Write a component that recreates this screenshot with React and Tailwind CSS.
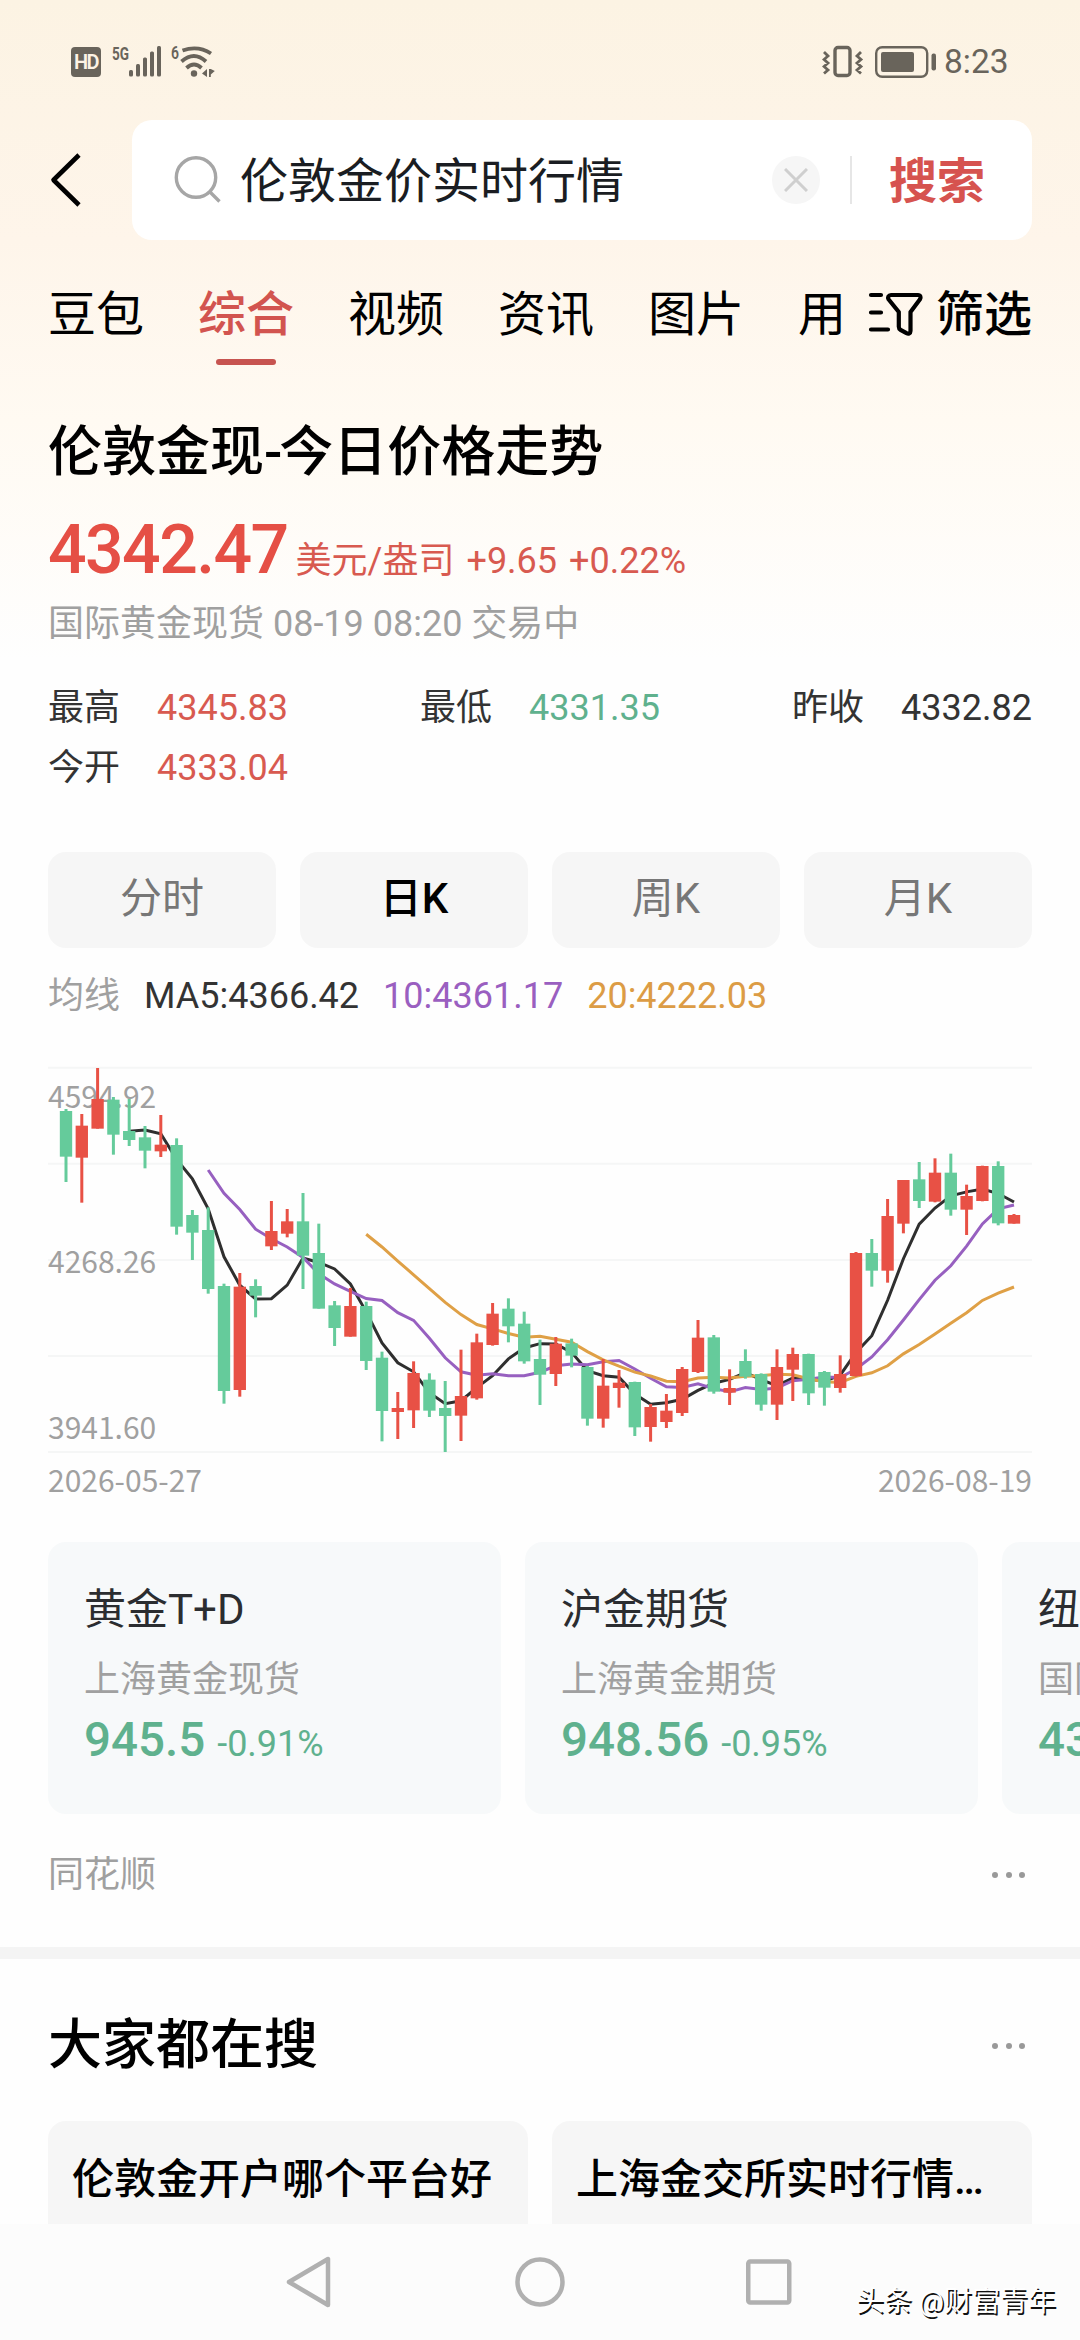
import { clsx } from 'clsx';

const tabs = ['豆包', '综合', '视频', '资讯', '图片', '用'];

const stats = [
  { label: '最高', value: '4345.83', color: 'text-[#d85a50]' },
  { label: '最低', value: '4331.35', color: 'text-[#5fb18e]' },
  { label: '昨收', value: '4332.82', color: 'text-[#333333]' },
  { label: '今开', value: '4333.04', color: 'text-[#d85a50]' },
];

const periods = ['分时', '日K', '周K', '月K'];

const related = [
  { name: '黄金T+D', market: '上海黄金现货', price: '945.5', change: '-0.91%' },
  { name: '沪金期货', market: '上海黄金期货', price: '948.56', change: '-0.95%' },
  { name: '纽', market: '国际', price: '43', change: '' },
];

const searches = ['伦敦金开户哪个平台好', '上海金交所实时行情…'];

// [direction, high, body top, body bottom, low] in chart units
const candles = [
  ['down', 177, 183, 320, 396],
  ['up', 192, 227, 323, 458],
  ['up', 54, 147, 236, 236],
  ['down', 141, 149, 254, 314],
  ['down', 147, 243, 270, 288],
  ['down', 228, 262, 302, 355],
  ['up', 195, 284, 304, 321],
  ['down', 265, 285, 530, 554],
  ['down', 480, 495, 548, 630],
  ['down', 472, 540, 717, 731],
  ['down', 701, 708, 1023, 1061],
  ['up', 669, 710, 1020, 1040],
  ['down', 688, 708, 737, 802],
  ['up', 453, 543, 589, 600],
  ['up', 477, 514, 551, 562],
  ['down', 429, 514, 617, 717],
  ['down', 521, 609, 776, 776],
  ['down', 753, 766, 834, 888],
  ['up', 714, 768, 860, 860],
  ['down', 755, 768, 933, 960],
  ['down', 905, 923, 1083, 1174],
  ['up', 1026, 1074, 1086, 1167],
  ['up', 934, 969, 1081, 1134],
  ['down', 970, 989, 1082, 1101],
  ['down', 993, 1074, 1098, 1206],
  ['up', 899, 1038, 1097, 1173],
  ['up', 851, 877, 1045, 1049],
  ['up', 759, 791, 885, 887],
  ['down', 745, 776, 829, 877],
  ['down', 785, 821, 934, 941],
  ['down', 869, 927, 974, 1065],
  ['up', 861, 881, 972, 1008],
  ['down', 866, 880, 917, 952],
  ['down', 948, 951, 1106, 1127],
  ['up', 927, 1007, 1106, 1133],
  ['up', 960, 998, 1014, 1073],
  ['down', 995, 996, 1132, 1158],
  ['up', 1062, 1071, 1131, 1175],
  ['up', 1032, 1082, 1116, 1134],
  ['up', 951, 957, 1089, 1098],
  ['up', 810, 863, 966, 969],
  ['down', 855, 862, 1025, 1031],
  ['up', 958, 1014, 1028, 1065],
  ['down', 898, 933, 980, 986],
  ['down', 970, 972, 1064, 1082],
  ['up', 898, 951, 1064, 1110],
  ['up', 893, 912, 959, 1053],
  ['down', 911, 912, 1030, 1065],
  ['down', 963, 966, 1013, 1067],
  ['up', 916, 972, 1014, 1028],
  ['up', 606, 609, 978, 980],
  ['down', 567, 609, 662, 710],
  ['up', 447, 498, 662, 698],
  ['up', 390, 390, 521, 550],
  ['down', 336, 388, 453, 474],
  ['up', 325, 368, 455, 457],
  ['down', 311, 368, 479, 497],
  ['up', 404, 438, 479, 555],
  ['up', 347, 348, 453, 454],
  ['down', 334, 348, 520, 526],
  ['up', 492, 495, 521, 521],
];

const candleX = (i) => 54 + i * 47.4;

// moving average of the closing prices over `days`
function average(days) {
  const closes = candles.map((c) => (c[0] === 'up' ? c[2] : c[3]));
  const points = [];
  for (let i = days - 1; i < closes.length; i++) {
    const sum = closes.slice(i - days + 1, i + 1).reduce((a, b) => a + b, 0);
    points.push(`${candleX(i).toFixed(1)},${(sum / days).toFixed(1)}`);
  }
  return points.join(' ');
}

function StatusBar() {
  return (
    <div className="flex h-[120px] shrink-0 items-start justify-between pl-[71px] pr-[71px] pt-[42px] text-[#69645b]">
      <div className="flex h-10 items-center">
        <div className="flex h-[30px] w-[30px] items-center justify-center rounded-[4px] bg-[#69645b] font-['Roboto',sans-serif] text-[20px] font-semibold leading-none tracking-[-1.5px] text-[#fdf3e5]">
          HD
        </div>
        <svg className="ml-[9px] overflow-visible" width="106" height="36" viewBox="0 0 106 36" fill="currentColor">
          <text x="2" y="15.500" fontSize="19" fontWeight="700" textLength="17" lengthAdjust="spacingAndGlyphs" fontFamily="Roboto">5G</text>
          <rect x="19" y="26" width="4" height="6.500" rx="1.5" />
          <rect x="26" y="20" width="4" height="12.500" rx="1.5" />
          <rect x="33" y="13.500" width="4" height="19" rx="1.5" />
          <rect x="40" y="7.500" width="4" height="25" rx="1.5" />
          <rect x="47" y="2" width="4" height="30.500" rx="1.5" />
          <text x="61" y="14.500" fontSize="19" fontWeight="600" textLength="8" lengthAdjust="spacingAndGlyphs" fontFamily="Roboto">6</text>
          <g fill="none" stroke="currentColor" strokeWidth="3.8">
            <path d="M72.500 6.500Q88 1 101 9.500" />
            <path d="M71.500 17.500Q84 6.500 96 17.500" />
            <path d="M76.500 24Q84 17 91.500 24" />
          </g>
          <circle cx="84" cy="29.500" r="3.2" />
          <path d="M97 25v8l-5-3.500zM99 25v8h1.800v-2.500l4-3.500-4-2z" />
        </svg>
      </div>
      <div className="flex h-10 items-center">
        <svg width="114" height="36" viewBox="0 0 114 36" fill="none" stroke="currentColor">
          <rect x="13" y="3.500" width="15" height="28" rx="3" strokeWidth="3.4" />
          <path d="M2 8l4 4-4 3.500 4 3.500-4 3.500 4 3.500-4 3.500M39 8l-4 4 4 3.500-4 3.500 4 3.500-4 3.500 4 3.500" strokeWidth="2.800" />
          <rect x="54.200" y="3.200" width="51" height="29.600" rx="6" strokeWidth="2.400" />
          <rect x="59" y="8" width="33" height="20" rx="2" fill="currentColor" stroke="none" />
          <rect x="109.500" y="9.500" width="4.500" height="17" rx="2" fill="currentColor" stroke="none" />
        </svg>
        <span className="ml-2 w-[65px] text-[33.500px] leading-10">8:23</span>
      </div>
    </div>
  );
}

function SearchBar() {
  return (
    <div className="flex h-[120px] shrink-0 items-center pl-12 pr-12">
      <svg width="84" height="60" viewBox="0 0 84 60" fill="none" stroke="#000" strokeWidth="4.6">
        <path d="M31 5L5.500 30l25.500 25" strokeLinejoin="round" />
      </svg>
      <div className="flex h-full flex-1 items-center rounded-[20px] bg-white">
        <svg className="ml-[42px]" width="48" height="48" viewBox="0 0 48 48" fill="none" stroke="#a6a6a6" strokeWidth="3.400">
          <circle cx="22" cy="21.500" r="19.700" />
          <path d="M36 36l9.500 9.500" />
        </svg>
        <span className="ml-[18px] flex-1 pt-1 text-[48px] leading-[60px] text-[#1a1d22]">伦敦金价实时行情</span>
        <div className="flex h-12 w-12 items-center justify-center rounded-full bg-[#f6f6f6]">
          <svg width="24" height="24" viewBox="0 0 24 24" stroke="#cfcfcf" strokeWidth="3">
            <path d="M1 1l22 22M23 1L1 23" />
          </svg>
        </div>
        <div className="ml-[30px] h-12 w-0.5 bg-[#e6e6e6]" />
        <span className="ml-[37px] mr-[47px] pt-1 text-[48px] font-bold leading-[60px] text-[#d6534f]">搜索</span>
      </div>
    </div>
  );
}

function Tabs() {
  return (
    <div className="flex h-[126px] shrink-0 items-start justify-between px-12 pt-[41px]">
      <div className="flex gap-[54px]">
        {tabs.map((tab) => {
          const active = tab === '综合';
          return (
            <div key={tab} className="flex flex-col items-center">
              <span
                className={clsx(
                  'whitespace-nowrap text-[48px] leading-[68px]',
                  active ? 'font-medium text-[#d2544f]' : 'text-black'
                )}
              >
                {tab}
              </span>
              {active && <div className="mt-[10px] h-1.5 w-[60px] rounded-sm bg-[#c75450]" />}
            </div>
          );
        })}
      </div>
      <div className="flex h-[68px] items-center">
        <svg className="mb-0.5 mr-3" width="56" height="48" viewBox="0 0 56 48" fill="none" stroke="#000" strokeWidth="4.200" strokeLinecap="round" strokeLinejoin="round">
          <path d="M3 5h10M3 22.500h10M3 39.500h17" />
          <path d="M23 5h27c2.500 0 3.200 2.500 2 4.300L42.500 22v19c0 2.300-2 3.200-4 2.200l-6-3.400c-1.200-.7-1.700-1.500-1.700-3V22L20.500 9.300C19.300 7.500 20.500 5 23 5z" />
        </svg>
        <span className="text-[48px] font-medium leading-[68px] text-black">筛选</span>
      </div>
    </div>
  );
}

function Quote() {
  return (
    <div className="px-12">
      <h1 className="mt-[47px] text-[54px] font-medium leading-[80px] text-black">
        伦敦金现<span className="tracking-[-3px]">-</span>今日价格走势
      </h1>
      <div className="mt-[15px] flex h-[84px] items-baseline text-[#d85a50]">
        <span className="text-[68px] font-medium leading-[84px] tracking-[-1.6px] text-[#e54f45]">4342.47</span>
        <div className="ml-2 flex gap-3 text-[36px] leading-[50px]">
          <span>美元/盎司</span>
          <span>+9.65</span>
          <span>+0.22%</span>
        </div>
      </div>
      <p className="mt-1.5 text-[36px] leading-[52px] text-[#a0a0a0]">国际黄金现货 08-19 08:20 交易中</p>
      <div className="mt-[28px] grid grid-cols-[240px_240px_240px] justify-between text-[36px] leading-[60px]">
        {stats.map((s) => (
          <div key={s.label} className="flex justify-between">
            <span className="text-[#333333]">{s.label}</span>
            <span className={s.color}>{s.value}</span>
          </div>
        ))}
      </div>
    </div>
  );
}

function Chart() {
  return (
    <div className="px-12">
      <div className="mt-[54px] grid grid-cols-4 gap-6">
        {periods.map((p) => (
          <button
            key={p}
            className={clsx(
              'h-24 rounded-[18px] bg-[#f6f6f6] pb-0.5 text-[42px] leading-[60px]',
              p === '日K' ? 'font-medium text-black' : 'text-[#777777]'
            )}
          >
            {p}
          </button>
        ))}
      </div>
      <div className="mt-[21px] flex gap-6 text-[36px] leading-[54px]">
        <span className="text-[#a0a0a0]">均线</span>
        <span className="text-[#333333]">MA5:4366.42</span>
        <span className="text-[#9a5fc0]">10:4361.17</span>
        <span className="text-[#dc9c45]">20:4222.03</span>
      </div>
      <svg className="mt-[27px] block" width="984" height="410" viewBox="0 0 2952 1230">
        {[53, 341.500, 630, 918, 1206].map((y) => (
          <line key={y} x1="0" x2="2952" y1={y} y2={y} stroke="#f5f6f6" strokeWidth="6" />
        ))}
        <g fill="#a0a0a0" fontSize="90" fontFamily="'Noto Sans CJK SC'">
          <text x="0" y="173">4594.92</text>
          <text x="0" y="668">4268.26</text>
          <text x="0" y="1168">3941.60</text>
        </g>
        <g fill="none" strokeWidth="9">
          <polyline points={average(5)} stroke="#2f2f2f" />
          <polyline points={average(10)} stroke="#9760c0" />
          <polyline points={average(20)} stroke="#dfa046" />
        </g>
        {candles.map(([dir, high, top, bottom, low], i) => (
          <g key={i} fill={dir === 'up' ? '#e85145' : '#65cb9b'}>
            <rect x={candleX(i) - 4.5} y={high} width="9" height={low - high} />
            <rect x={candleX(i) - 18.5} y={top} width="37" height={bottom - top} />
          </g>
        ))}
      </svg>
      <div className="flex justify-between pt-px font-['Noto_Sans_CJK_SC',sans-serif] text-[30px] leading-9 text-[#a0a0a0]">
        <span>2026-05-27</span>
        <span>2026-08-19</span>
      </div>
    </div>
  );
}

function More() {
  return (
    <div className="flex gap-[7.5px] pr-[7px]">
      <i className="h-1.5 w-1.5 rounded-full bg-[#999999]" />
      <i className="h-1.5 w-1.5 rounded-full bg-[#999999]" />
      <i className="h-1.5 w-1.5 rounded-full bg-[#999999]" />
    </div>
  );
}

function Related() {
  return (
    <div>
      <div className="mt-[45px] flex gap-6 overflow-hidden pl-12">
        {related.map((r) => (
          <div key={r.name} className="h-[272px] w-[453px] shrink-0 rounded-[18px] bg-[#f7f9fa] px-9 pt-[38px]">
            <div className="text-[42px] leading-[60px] text-[#2b2d30]">{r.name}</div>
            <div className="mt-[13px] text-[36px] leading-[54px] text-[#a0a0a0]">{r.market}</div>
            <div className="flex items-baseline gap-3 text-[#5fb18e]">
              <span className="text-[47.5px] font-medium leading-[66px]">{r.price}</span>
              <span className="text-[36px]">{r.change}</span>
            </div>
          </div>
        ))}
      </div>
      <div className="flex h-[133px] items-center justify-between px-12 pb-3">
        <span className="text-[36px] text-[#a0a0a0]">同花顺</span>
        <More />
      </div>
    </div>
  );
}

function HotSearches() {
  return (
    <div className="min-h-0 flex-1 overflow-hidden px-12">
      <div className="flex h-[162px] items-center justify-between pt-3">
        <h2 className="text-[54px] font-medium leading-[80px] text-black">大家都在搜</h2>
        <More />
      </div>
      <div className="grid grid-cols-2 gap-6">
        {searches.map((s) => (
          <div key={s} className="h-[120px] whitespace-nowrap rounded-[18px] bg-[#f6f6f6] px-6 pt-[29px] text-[42px] font-medium leading-[60px] text-black">
            {s}
          </div>
        ))}
      </div>
    </div>
  );
}

function NavBar() {
  return (
    <div className="relative h-[116px] shrink-0 bg-[#fcfcfc]">
      <div className="flex h-full items-center justify-center gap-[181px]">
        <svg width="48" height="56" viewBox="0 0 48 56" fill="none" stroke="#b0b0b0" strokeWidth="4.500" strokeLinejoin="round">
          <path d="M42 5v46L3 28z" />
        </svg>
        <svg width="50" height="50" viewBox="0 0 50 50" fill="none" stroke="#b0b0b0" strokeWidth="4.500">
          <circle cx="25" cy="25" r="22.500" />
        </svg>
        <svg width="48" height="48" viewBox="0 0 48 48" fill="none" stroke="#b0b0b0" strokeWidth="4.500">
          <rect x="2.250" y="3.500" width="41" height="41" rx="2" />
        </svg>
      </div>
      <span className="absolute bottom-[20px] right-6 whitespace-nowrap text-[28px] leading-9 text-white [text-shadow:1.5px_1.5px_0_#111]">
        头条 @财富青年
      </span>
    </div>
  );
}

export default function App() {
  return (
    <div className="flex h-[2340px] w-[1080px] flex-col overflow-hidden bg-[#fefefe] bg-[linear-gradient(#fcf3e3_0px,#fef5ea_240px,#fffaf2_420px,#fefefe_660px)] font-['Roboto','Noto_Sans_CJK_SC',sans-serif]">
      <StatusBar />
      <SearchBar />
      <Tabs />
      <Quote />
      <Chart />
      <Related />
      <div className="h-3 shrink-0 bg-[#f4f4f4]" />
      <HotSearches />
      <NavBar />
    </div>
  );
}
